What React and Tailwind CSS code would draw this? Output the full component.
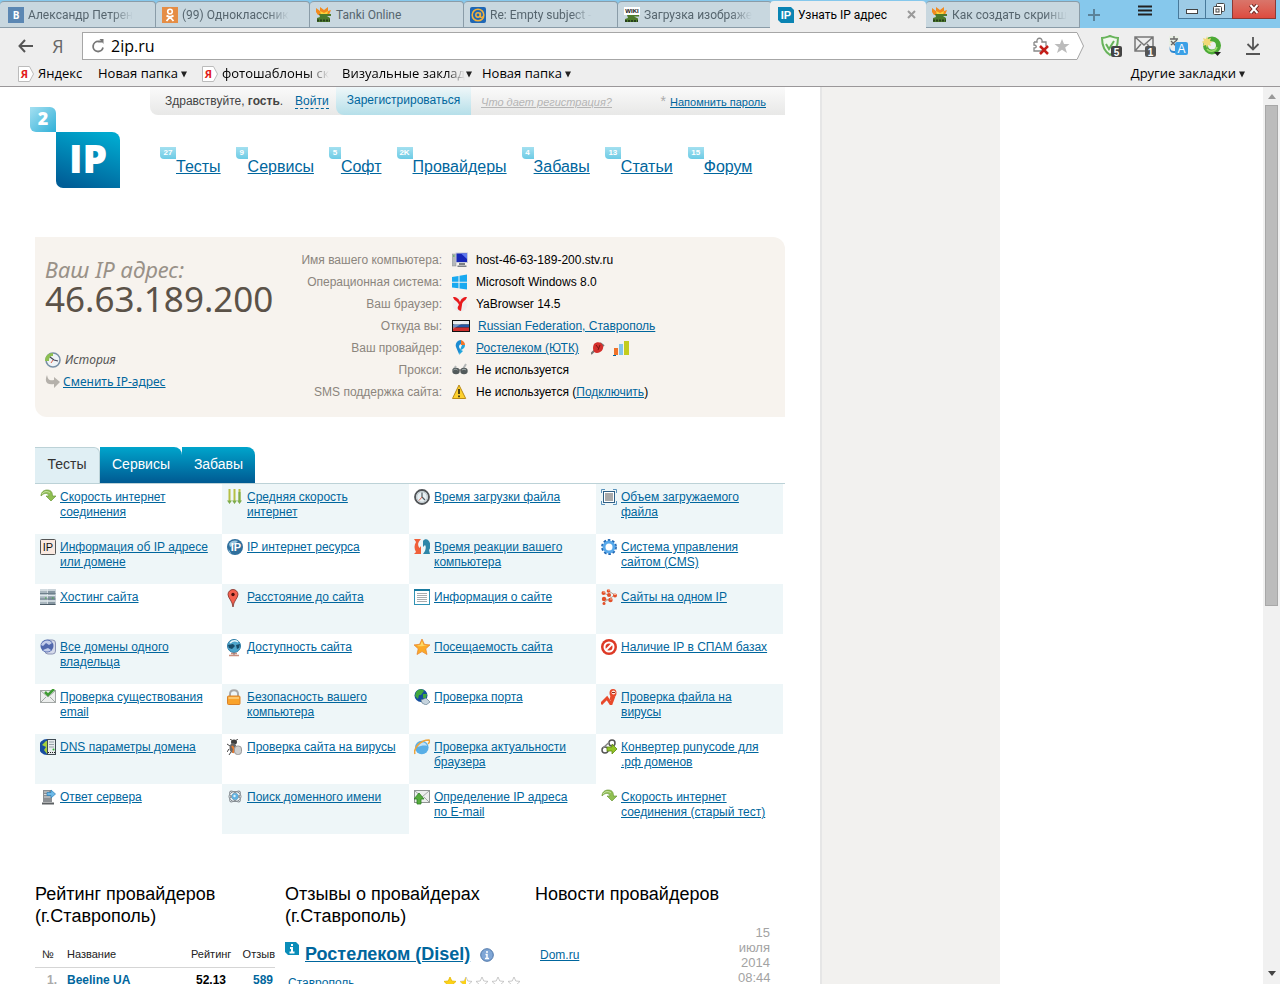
import React, { useState } from "react";

const Svg = ({ children, size = 16, box = 16, className = "" }) => (
  <svg
    width={size}
    height={size}
    viewBox={`0 0 ${box} ${box}`}
    fill="none"
    aria-hidden="true"
    className={`shrink-0 ${className}`}
  >
    {children}
  </svg>
);

// site icons, all drawn on a 16x16 grid
const icons = {
  speed: (
    <Svg>
      <path d="M1 7C1 3 4 1 7 1c4 0 5.500 2 5.500 6H16l-5 5-5-5h3C8 4 5 3 1 7z" fill="#8fbf52" stroke="#6f9a3c" strokeWidth=".7" />
      <path d="M2 5c2-3 6-3 8-1" stroke="#c9e2a4" />
    </Svg>
  ),
  arrows: (
    <Svg>
      <path d="M2.500 0v12M7.500 0v12M12.500 0v12" stroke="#b5bf45" strokeWidth="2" />
      <path d="M0 11.500h5L2.500 15zM5 11.500h5L7.500 15zM10 11.500h5L12.500 15z" fill="#7eac4d" />
      <path d="M12.500 3v9" stroke="#7eac4d" strokeWidth="2" />
    </Svg>
  ),
  clock: (
    <Svg>
      <circle cx="8" cy="8" r="7" fill="#e8eff2" stroke="#505356" strokeWidth="1.800" />
      <circle cx="8" cy="8" r="5.300" stroke="#b9c4c9" />
      <path d="M8 3.500V8l3 3" stroke="#4e5a61" strokeWidth="1.200" />
      <path d="M8 8l-3 3.500" stroke="#d8624d" />
    </Svg>
  ),
  size: (
    <Svg>
      <path d="M.5 4V.5H4M12 .5h3.500V4M15.500 12v3.500H12M4 15.500H.5V12" stroke="#5b93bd" />
      <rect x="2.500" y="2.500" width="11" height="11" fill="#fff" stroke="#2f5f85" />
      <rect x="4" y="4" width="8" height="8" fill="#a9a9a9" />
    </Svg>
  ),
  ip: (
    <Svg>
      <rect x=".5" y=".5" width="15" height="15" rx="1" fill="#f9e9e0" stroke="#555" />
      <text x="8" y="12" textAnchor="middle" fontSize="11" fontFamily="Liberation Sans, sans-serif" fill="#111">IP</text>
    </Svg>
  ),
  ipGlobe: (
    <Svg>
      <circle cx="8" cy="8" r="8" fill="#2f6f9d" />
      <path d="M2 5c2-4 7-4 9-3L8 5 3 8zM1.500 10l3 5c-2-1-3-3-3-5z" fill="#9cc6de" />
      <text x="9" y="12" textAnchor="middle" fontSize="11" fontWeight="bold" fontFamily="Liberation Sans, sans-serif" fill="#fff">IP</text>
    </Svg>
  ),
  reaction: (
    <Svg>
      <path d="M0 0h7L5 2.500C3.500 5 4 7 5.500 9L7 7v8H0l2-2C0 10 0 6 2 3z" fill="#f0603a" />
      <path d="M9 2c1-2 4-2 5-1 3 3 3 8 1 10l1 4H9l2-3c1-3 1-5 0-6L9 8z" fill="#2d86a8" />
    </Svg>
  ),
  gear: (
    <Svg>
      <circle cx="8" cy="8" r="6.500" stroke="#1f66b3" strokeWidth="2.800" strokeDasharray="2.400 1.700" />
      <circle cx="8" cy="8" r="5" fill="#fff" stroke="#58a8ea" strokeWidth="3" />
    </Svg>
  ),
  hosting: (
    <Svg>
      <rect width="7.500" height="16" fill="#aab7bf" />
      <rect x="8" width="7.500" height="16" fill="#8797a2" />
      <path d="M0 1h15.500M0 6.500h15.500M0 12h15.500" stroke="#dfe8ec" strokeWidth="1.500" />
      <path d="M0 4.500h15.500M0 10h15.500" stroke="#6f808c" />
      <path d="M5 9h1.500M12 9h1.500" stroke="#3faa3f" />
      <path d="M0 15.500h15.500" stroke="#4d5d68" />
    </Svg>
  ),
  pin: (
    <Svg className="overflow-visible">
      <path d="M6 18C5.500 12 1 9 1 5.500a5 5 0 0110 0C11 9 6.500 12 6 18z" fill="#f4604f" stroke="#7c2b23" strokeWidth=".8" />
      <circle cx="6" cy="5.500" r="1.700" fill="#4a0e0a" />
    </Svg>
  ),
  doc: (
    <Svg>
      <rect x=".5" y=".5" width="15" height="15" fill="#fff" stroke="#3093b5" />
      <path d="M0 1h16" stroke="#1a7ba0" strokeWidth="2" />
      <path d="M3 4.500h10M3 6.500h10M3 8.500h10M3 10.500h10M3 12.500h10" stroke="#a8acae" />
    </Svg>
  ),
  sites: (
    <Svg>
      <path d="M6 1l8 5-12 8M2 4l8 3M2 9l8 3" stroke="#b9a292" />
      <g fill="#e2502a">
        <circle cx="2.500" cy="4" r="2" />
        <circle cx="7.500" cy="2" r="1.800" />
        <circle cx="8" cy="6" r="2" />
        <circle cx="14" cy="6.500" r="2" />
        <circle cx="3" cy="10" r="2.200" />
        <circle cx="9.500" cy="11" r="2.200" />
        <circle cx="3" cy="14.500" r="1.500" />
      </g>
      <path d="M7 1h2M2 3h2M13 5.500h2M9 10h2" stroke="#f9b394" />
    </Svg>
  ),
  domains: (
    <Svg>
      <rect x="5" y="1" width="10.500" height="14" rx="3" fill="#d5daea" stroke="#8b93b4" />
      <circle cx="7" cy="7" r="6.500" fill="#5168ad" />
      <path d="M1 6c2-5 8-6 11-2L9 6 6 4 3 7zM3 11c2 2 6 2 8 0L8 9z" fill="#c3cdea" />
    </Svg>
  ),
  globe: (
    <Svg className="overflow-visible">
      <circle cx="7" cy="7" r="6.500" fill="#4da5cc" stroke="#2d7ca5" />
      <path d="M1 6l5-1 2 2-3 3-3-1zM9 6l4-1-1 4-2 1z" fill="#164a68" />
      <path d="M3 4c2-2 5-3 8-1" stroke="#e6f6fc" strokeWidth="1.500" />
      <path d="M4 14.500h6M2 16.500h10" stroke="#c98f7f" strokeWidth="1.500" />
      <path d="M7 14v2" stroke="#88767a" />
    </Svg>
  ),
  star: (
    <Svg>
      <path d="M8 0l2.400 5.300 5.600.6-4.200 3.900L13 15.500 8 12.600l-5 2.900 1.200-5.700L0 5.900l5.600-.6z" fill="#fba928" stroke="#e5812a" strokeWidth=".7" />
      <path d="M8 2l1.700 4.200 3.500.5C9 7 5 8 3 6.500L6.300 6z" fill="#fdd866" />
    </Svg>
  ),
  spam: (
    <Svg>
      <circle cx="8" cy="8" r="8" fill="#dd3a26" />
      <circle cx="8" cy="8" r="4.500" stroke="#fff" strokeWidth="2" />
      <path d="M5 11l6-6" stroke="#fff" strokeWidth="2" />
    </Svg>
  ),
  mailCheck: (
    <Svg>
      <rect x=".5" y="1.500" width="15" height="12" fill="#eceeed" stroke="#a3a8a6" />
      <path d="M1 2l7 6 7-6M1 13l5-5M15 13l-5-5" stroke="#a3a8a6" />
      <path d="M5 3l3 3 6-6" stroke="#3f9c34" strokeWidth="2.500" />
    </Svg>
  ),
  lock: (
    <Svg>
      <path d="M3 8V5c0-5 8-5 8 0v3" stroke="#a9a9a9" strokeWidth="2" />
      <rect x=".5" y="7" width="12.500" height="8.500" rx="1" fill="#f9a32c" stroke="#d9822a" />
      <path d="M1.500 9h10.500" stroke="#fdd384" strokeWidth="1.500" />
    </Svg>
  ),
  port: (
    <Svg>
      <circle cx="7" cy="6.500" r="6.500" fill="#144d9d" />
      <path d="M2 3c3-4 7-3 8-1L7 6l-2 0-1 4-3-3zM9 5l4 0-1 4-3 0z" fill="#42a83e" />
      <path d="M7 11l5-2 4 4-4 3-4-2z" fill="#c6d4de" stroke="#627d91" strokeWidth=".7" />
    </Svg>
  ),
  virus: (
    <Svg>
      <path d="M0 15l6-6 4 6 3-8" stroke="#e8492b" strokeWidth="3" />
      <ellipse cx="12" cy="4" rx="3.500" ry="4" fill="#e8492b" />
      <ellipse cx="12.500" cy="3.500" rx="2" ry="2" fill="#fbe3dc" />
      <path d="M11 3.500h3" stroke="#8a2413" />
      <path d="M10.500 7l-1 4" stroke="#e8492b" strokeWidth="2" />
    </Svg>
  ),
  dns: (
    <Svg>
      <path d="M7 0A8 8 0 007 16z" fill="#174da0" />
      <path d="M6 2L2 6l4 2-2 3 3 4V2z" fill="#a6cf3c" />
      <rect x="7.500" y=".5" width="8" height="15" fill="#e6eaec" stroke="#3f4a52" />
      <path d="M9 3h5M9 5.500h5M9 8h5" stroke="#98a2a8" />
      <circle cx="13.500" cy="10.500" r="1" fill="#2bb52b" />
      <path d="M8 13.500h7" stroke="#222" strokeDasharray="1 1" />
    </Svg>
  ),
  bug: (
    <Svg>
      <ellipse cx="7" cy="3" rx="3" ry="2.500" fill="#3d3d3d" />
      <ellipse cx="6" cy="9" rx="3.500" ry="5" fill="#666" />
      <path d="M3 0l3 2M11 0L8 2M3 7L0 5M2 10l-2 3M4 13l-2 3" stroke="#444" />
      <path d="M5 7l2 3-1 4" stroke="#ea7a2e" strokeWidth="2" />
      <rect x="7.500" y="7" width="7" height="8.500" rx="3" fill="#cfcfcf" stroke="#9a9a9a" />
    </Svg>
  ),
  ie: (
    <Svg>
      <circle cx="7.800" cy="8.500" r="6.800" fill="#58aee6" />
      <path d="M3 8c1-6 9-6 10-1C10 6 7 7 3 8z" fill="#bfe2f8" />
      <path d="M1 15C-1 10 6 1 15 1c1 1 0 3-1 4" stroke="#eda43b" strokeWidth="1.500" />
    </Svg>
  ),
  puny: (
    <Svg>
      <circle cx="11" cy="4" r="3" stroke="#555" strokeWidth="1.500" />
      <circle cx="4" cy="11" r="3" stroke="#555" strokeWidth="1.500" />
      <path d="M8.500 3L2 9M12 7l-5 5" stroke="#888" strokeWidth="1.500" />
      <path d="M6 8h5V5l5 5-5 5v-3H6z" fill="#93c426" stroke="#5f8b13" strokeWidth=".8" />
    </Svg>
  ),
  server: (
    <Svg>
      <path d="M3 1h8l1 1v11H3z" fill="#8b8f93" />
      <path d="M4 3h5M4 5.500h5M4 8h7" stroke="#d8dadb" />
      <path d="M2 14.500h12" stroke="#5c6063" strokeWidth="2" />
      <path d="M7 3.500h4V1l4.500 4L11 9V6.500H7z" fill="#6cb9e8" stroke="#2c80b8" strokeWidth=".7" />
    </Svg>
  ),
  atom: (
    <Svg>
      <g stroke="#82898f">
        <ellipse cx="8" cy="7.500" rx="7" ry="3" transform="rotate(45 8 7.500)" />
        <ellipse cx="8" cy="7.500" rx="7" ry="3" transform="rotate(-45 8 7.500)" />
        <ellipse cx="8" cy="7.500" rx="6" ry="5" />
      </g>
      <circle cx="8" cy="7.500" r="3.200" fill="#5fb2e2" />
      <circle cx="7.500" cy="7" r="1.200" fill="#dff2fc" />
    </Svg>
  ),
  mailUp: (
    <Svg>
      <rect x=".5" y="1.500" width="15" height="12" fill="#eceeed" stroke="#8f9593" />
      <path d="M1 2l7 6 7-6M15 13l-5-5" stroke="#a3a8a6" />
      <path d="M3 15V10H0l5-6 5 6H7v5z" fill="#57ad3e" stroke="#2f7d24" strokeWidth=".8" />
    </Svg>
  ),
  computer: (
    <Svg>
      <rect y="2" width="4" height="12" fill="#b5b8bb" stroke="#8b8f93" strokeWidth=".5" />
      <path d="M1 4h1.500" stroke="#35b535" />
      <rect x="4" y="1" width="11.500" height="9.500" fill="#1626b8" stroke="#c6cad8" />
      <path d="M9 1.500h6V7z" fill="#5d78ef" />
      <path d="M7 11h6v2H7zM5.500 13.500h9V15h-9z" fill="#7b8085" />
    </Svg>
  ),
  windows: (
    <Svg>
      <path d="M0 3l6.500-1v5.700H0zM7.500 1.800L15 .5v7.200H7.500zM0 8.700h6.500v5.600L0 13.400zM7.500 8.700H15v6.800l-7.500-1z" fill="#19a9f0" />
    </Svg>
  ),
  yabrowser: (
    <Svg>
      <circle cx="8" cy="8" r="7.500" fill="#eeeeee" />
      <path d="M1 1c4 0 6 2 7 5 1-3 3-5 7-5-1 4-5 4-5 8l-1 6c-4-1-4-4-2-6-1-4-5-4-6-8z" fill="#e8191c" />
    </Svg>
  ),
  flag: (
    <svg width="18" height="12" viewBox="0 0 18 12" aria-hidden="true" className="shrink-0">
      <rect width="18" height="12" fill="#111" />
      <path d="M1 1h16v3.500H1z" fill="#e7eaee" />
      <path d="M1 4.500h16v3H1z" fill="#2458a6" />
      <path d="M1 7.500h16V11H1z" fill="#cf2f2d" />
      <path d="M1 5l6-4h7L1 9z" fill="#fff" opacity=".35" />
    </svg>
  ),
  rostelecom: (
    <Svg>
      <path d="M9 0C5 0 3 4 4 7l3 7 2-3-2-4c0-2 1-3 3-3z" fill="#1c8bd1" />
      <path d="M9 0c3 1 4 3 4 5L9 5z" fill="#f1762b" />
      <path d="M13 5c0 3-2 4-4 5l2 1-4 4 1-5 2-5z" fill="#21a5dc" />
    </Svg>
  ),
  glasses: (
    <Svg>
      <path d="M1 8l3-4M11 7l3-5" stroke="#b5b8b8" strokeWidth="2" />
      <ellipse cx="4" cy="9" rx="3.700" ry="3.200" fill="#525a5b" />
      <ellipse cx="12" cy="9" rx="3.700" ry="3.200" fill="#525a5b" />
      <path d="M1.500 8c1-1 3-1 4 0M10 8c1-1 3-1 4 0" stroke="#a9b3b3" />
      <path d="M6 8h4" stroke="#666" />
    </Svg>
  ),
  warning: (
    <Svg>
      <path d="M7 1L13.700 14.500H.5z" fill="#fdd02c" stroke="#b98a17" strokeLinejoin="round" />
      <path d="M7 5v5M7 11.500v1.800" stroke="#3f3410" strokeWidth="1.800" />
    </Svg>
  ),
};

const tankIcon = (
  <Svg>
    <path d="M0 1l4 3 0-4 4 3 4-3 0 4 3-1-2 5H2L0 5z" fill="#f28a1e" />
    <path d="M4 4l4 2 4-2-1 4H5z" fill="#fcd23a" />
    <path d="M3 7h12v2H11l3 2v4H1v-4l3-1z" fill="#4d7a2c" />
    <path d="M1 13.500h13" stroke="#26401a" strokeWidth="2" strokeDasharray="2 1" />
  </Svg>
);

const browserTabs = [
  {
    title: "Александр Петрен",
    icon: (
      <Svg>
        <rect width="16" height="16" fill="#5b87b3" />
        <text x="8" y="12" textAnchor="middle" fontSize="10" fontWeight="bold" fontFamily="Open Sans, sans-serif" fill="#fff">B</text>
      </Svg>
    ),
  },
  {
    title: "(99) Одноклассник",
    icon: (
      <Svg>
        <rect width="16" height="16" fill="#e58d45" />
        <circle cx="8" cy="4.500" r="2.300" stroke="#fff" strokeWidth="1.600" />
        <path d="M4.500 8.500c2 1.500 5 1.500 7 0M8 10l-3.500 4M8 10l3.500 4" stroke="#fff" strokeWidth="1.800" />
      </Svg>
    ),
  },
  { title: "Tanki Online", icon: tankIcon },
  {
    title: "Re: Empty subject -",
    icon: (
      <Svg>
        <rect width="16" height="16" rx="2" fill="#1f67b5" />
        <circle cx="8" cy="8" r="5.800" stroke="#f3b23c" strokeWidth="1.600" />
        <circle cx="8" cy="8" r="2.200" stroke="#f3b23c" strokeWidth="1.500" />
        <path d="M10.500 5.500v4.500c1 1 2.500 0 3-1" stroke="#f3b23c" strokeWidth="1.300" />
      </Svg>
    ),
  },
  {
    title: "Загрузка изображе",
    icon: (
      <Svg>
        <rect width="16" height="8" fill="#fff" />
        <text x="8" y="6" textAnchor="middle" fontSize="6" fontWeight="bold" fontFamily="Liberation Sans, sans-serif" fill="#111">WIKI</text>
        <path d="M3 8h12v1.500H10l4 2V15H1v-3l3-1z" fill="#4d7a2c" />
        <path d="M1 14h13" stroke="#26401a" strokeWidth="2" strokeDasharray="2 1" />
      </Svg>
    ),
  },
  {
    title: "Узнать IP адрес",
    active: true,
    icon: (
      <Svg>
        <path d="M0 0h13l3 3v13H3l-3-3z" fill="#0b84b3" />
        <text x="8" y="12" textAnchor="middle" fontSize="11" fontWeight="bold" fontFamily="Liberation Sans, sans-serif" fill="#fff">IP</text>
      </Svg>
    ),
  },
  { title: "Как создать скринш", icon: tankIcon },
];

const navLinks = [
  ["27", "Тесты"],
  ["9", "Сервисы"],
  ["5", "Софт"],
  ["2K", "Провайдеры"],
  ["4", "Забавы"],
  ["13", "Статьи"],
  ["15", "Форум"],
];

const tests = [
  ["speed", "Скорость интернет соединения"],
  ["arrows", "Средняя скорость интернет"],
  ["clock", "Время загрузки файла"],
  ["size", "Объем загружаемого файла"],
  ["ip", "Информация об IP адресе или домене"],
  ["ipGlobe", "IP интернет ресурса"],
  ["reaction", "Время реакции вашего компьютера"],
  ["gear", "Система управления сайтом (CMS)"],
  ["hosting", "Хостинг сайта"],
  ["pin", "Расстояние до сайта"],
  ["doc", "Информация о сайте"],
  ["sites", "Сайты на одном IP"],
  ["domains", "Все домены одного владельца"],
  ["globe", "Доступность сайта"],
  ["star", "Посещаемость сайта"],
  ["spam", "Наличие IP в СПАМ базах"],
  ["mailCheck", "Проверка существования email"],
  ["lock", "Безопасность вашего компьютера"],
  ["port", "Проверка порта"],
  ["virus", "Проверка файла на вирусы"],
  ["dns", "DNS параметры домена"],
  ["bug", "Проверка сайта на вирусы"],
  ["ie", "Проверка актуальности браузера"],
  ["puny", "Конвертер punycode для .рф доменов"],
  ["server", "Ответ сервера"],
  ["atom", "Поиск доменного имени"],
  ["mailUp", "Определение IP адреса по\u00a0E-mail"],
  ["speed", "Скорость интернет соединения (старый тест)"],
];

const Link = ({ children, className = "" }) => (
  <a href="#" className={`text-[#00669d] underline ${className}`}>
    {children}
  </a>
);

const BrowserTabs = () => (
  <div className="flex h-7 bg-[#86c8ec] pt-px text-xs">
    <div role="tablist" className="flex min-w-0 [font-family:Roboto,'Open_Sans',sans-serif]">
      {browserTabs.map((tab) => (
        <button
          key={tab.title}
          role="tab"
          aria-selected={!!tab.active}
          className={
            tab.active
              ? "-ml-0.5 flex w-[156px] min-w-0 items-center gap-1 rounded-t-sm bg-[#eeeeee] px-2 text-black"
              : "flex w-[154px] min-w-0 items-center gap-1 rounded-t-sm border-t border-r border-b border-[#8a9ca8] bg-[#c8d7df] pl-1.5 text-[#56656e] first:w-[156px] first:pl-2"
          }
        >
          {tab.icon}
          <span
            className={
              tab.active || tab.title === "Tanki Online"
                ? "flex-1 text-left whitespace-nowrap"
                : "text-left whitespace-nowrap mask-r-from-80%"
            }
          >
            {tab.title}
          </span>
          {tab.active && (
            <Svg size={9} box={9} className="mr-0.5">
              <path d="M1 1l7 7M8 1L1 8" stroke="#999" strokeWidth="2" />
            </Svg>
          )}
        </button>
      ))}
    </div>
    <button aria-label="Новая вкладка" className="ml-2 flex items-center">
      <Svg size={12} box={12}>
        <path d="M6 0v12M0 6h12" stroke="#5b8299" strokeWidth="2" />
      </Svg>
    </button>
    <button aria-label="Меню" className="mr-[26px] ml-auto flex pt-1">
      <Svg size={14} box={14}>
        <path d="M0 1.500h14M0 5.500h14M0 9.500h14" stroke="#222" strokeWidth="2" />
      </Svg>
    </button>
    <div className="-mt-px mr-1 flex h-[19px]">
      <button aria-label="Свернуть" className="flex w-7 items-center justify-center border border-t-0 border-[#48799a] bg-[#9dcbe6]">
        <Svg size={12} box={12}>
          <rect x=".5" y="6.500" width="11" height="4" fill="#fff" stroke="#444" />
        </Svg>
      </button>
      <button aria-label="Развернуть" className="flex w-[26px] items-center justify-center border-b border-[#48799a] bg-[#9dcbe6]">
        <Svg size={12} box={12}>
          <rect x="3.500" y=".5" width="8" height="8" rx="1" fill="#fff" stroke="#444" />
          <rect x=".5" y="3.500" width="8" height="8" rx="1" fill="#fff" stroke="#444" />
          <rect x="3" y="6" width="3" height="3" stroke="#444" />
        </Svg>
      </button>
      <button aria-label="Закрыть" className="flex w-11 items-center justify-center border border-t-0 border-[#8c3a35] bg-linear-to-b from-[#d9756a] to-[#dd4a3f]">
        <Svg size={10} box={10}>
          <path d="M1.500 1l7 8M8.500 1l-7 8" stroke="#6b2420" strokeWidth="4" />
          <path d="M1.500 1l7 8M8.500 1l-7 8" stroke="#fff" strokeWidth="2" />
        </Svg>
      </button>
    </div>
  </div>
);

const Toolbar = () => {
  const [address, setAddress] = useState("2ip.ru");

  return (
    <div className="flex items-center pt-1">
      <button aria-label="Назад" className="ml-[18px]">
        <Svg>
          <path d="M15 8H2M7 2L1.500 8 7 14" stroke="#555" strokeWidth="2" />
        </Svg>
      </button>
      <button aria-label="Яндекс" className="ml-4 w-4 text-lg leading-7 text-[#666] [font-family:'Liberation_Sans_Narrow','Open_Sans',sans-serif]">
        Я
      </button>
      <div className="ml-4 flex h-7 flex-1 items-center border border-r-0 border-[#a6a6a6] bg-white">
        <button aria-label="Обновить" className="ml-2">
          <Svg size={14} box={14}>
            <path d="M12 8.500A5 5 0 117.500 2.500H11" stroke="#777" strokeWidth="1.800" />
            <path d="M8.500 0l4 0v5z" fill="#777" />
          </Svg>
        </button>
        <input
          aria-label="Адрес"
          value={address}
          onChange={(e) => setAddress(e.target.value)}
          className="ml-1.5 min-w-0 flex-1 bg-transparent text-base text-black outline-none"
        />
        <Svg size={18} box={18}>
          <path d="M2 5h3c-1-5 6-5 5 0h4v4M14 14H2v-3c3 0 3-3 0-3V5" stroke="#888" strokeWidth="1.300" />
          <path d="M8 9l8 8M16 9l-8 8" stroke="#c41f1a" strokeWidth="2.500" />
        </Svg>
        <Svg className="mr-1 ml-1">
          <path d="M8 1l2 5h5.500l-4.300 3.400L13 15l-5-3.300L3 15l1.800-5.600L.5 6H6z" fill="#bbb" />
        </Svg>
      </div>
      <svg width="10" height="28" viewBox="0 0 10 28" aria-hidden="true">
        <path d="M0 0h3l6 14-6 14H0z" fill="#fff" />
        <path d="M0 .5h3L9.500 14 3 27.500H0" fill="none" stroke="#a6a6a6" />
      </svg>
      <div className="mr-[18px] ml-4 flex items-center gap-3">
        <Svg size={22} box={22}>
          <path d="M2 3c3 0 5-1 8-2 3 1 5 2 8 2 0 8-2 13-8 17C4 16 2 11 2 3z" fill="#f0f7ed" stroke="#67b35a" strokeWidth="2" />
          <path d="M6 9l3 5 5-8" stroke="#67b35a" strokeWidth="2" />
          <rect x="11" y="11" width="11" height="11" rx="2" fill="#444" />
          <text x="16.500" y="20.500" textAnchor="middle" fontSize="10" fontWeight="bold" fontFamily="Liberation Sans, sans-serif" fill="#fff">5</text>
        </Svg>
        <Svg size={22} box={22}>
          <path d="M1 2h18v14H1zM1 2l9 8 9-8M1 16l6-7M19 16l-6-7" stroke="#777" strokeWidth="1.500" />
          <rect x="11" y="11" width="11" height="11" rx="2" fill="#555" />
          <text x="16.500" y="20.500" textAnchor="middle" fontSize="10" fontWeight="bold" fontFamily="Liberation Sans, sans-serif" fill="#fff">1</text>
        </Svg>
        <Svg size={20} box={20}>
          <rect x="1" y="0" width="10" height="10" rx="1" fill="#e9efe4" />
          <path d="M2 3h8M6 0v3M3 9l6-5M3 5l5 5" stroke="#666" strokeWidth="1.300" />
          <path d="M2 10c0 4 1 5 5 5v-2l3 4H6C2 17 1 14 2 10z" fill="#2c86cf" />
          <rect x="7" y="6" width="13" height="13" rx="2" fill="#3ba0e6" />
          <text x="13.500" y="16.500" textAnchor="middle" fontSize="12" fontFamily="Liberation Sans, sans-serif" fill="#fff">A</text>
        </Svg>
        <Svg size={20} box={20} className="ml-0.5">
          <circle cx="10" cy="9.500" r="6.500" stroke="#4caa36" strokeWidth="5" />
          <path d="M5 13c3 4 9 2 10-2" stroke="#9ddc6a" strokeWidth="1.500" />
          <path d="M5 0l1 3 3-1-1 3 3 1-3 1 1 3-3-1-1 3-1-3-3 1 1-3-3-1 3-1-1-3 3 1z" fill="#f2d978" />
          <path d="M12 16h7l-3.500 4z" fill="#222" />
        </Svg>
        <Svg size={18} box={18} className="ml-2.5">
          <path d="M9 0v12M3.500 7L9 12.500 14.500 7M2 17h14" stroke="#555" strokeWidth="1.800" />
        </Svg>
      </div>
    </div>
  );
};

const YandexIcon = () => (
  <Svg>
    <path d="M.5 .5h11l4 7.500-4 7.500H.5z" fill="#fff" stroke="#bbb" />
    <text x="6.500" y="12" textAnchor="middle" fontSize="11" fontWeight="bold" fontFamily="Open Sans, sans-serif" fill="#e21b1b">Я</text>
  </Svg>
);

const Folder = ({ children, className = "" }) => (
  <button className={`flex items-center gap-0.5 ${className}`}>
    <span className="whitespace-nowrap">{children}</span>
    <Svg size={8} box={8}>
      <path d="M1 1.500h6L4 7.500z" fill="#222" />
    </Svg>
  </button>
);

const Bookmarks = () => (
  <div className="flex h-[27px] items-center border-b border-[#9a9799] px-[18px] pt-0.5 text-[13px] text-black">
    <a href="#" className="flex w-20 items-center gap-1">
      <YandexIcon />
      Яндекс
    </a>
    <Folder className="w-[104px]">Новая папка</Folder>
    <a href="#" className="flex w-[140px] items-center gap-1">
      <YandexIcon />
      <span className="whitespace-nowrap mask-r-from-80%">фотошаблоны ск</span>
    </a>
    <button className="flex w-[140px] items-center">
      <span className="text-left whitespace-nowrap mask-r-from-85%">Визуальные заклад</span>
      <Svg size={8} box={8}>
        <path d="M1 1.500h6L4 7.500z" fill="#222" />
      </Svg>
    </button>
    <Folder>Новая папка</Folder>
    <Folder className="mr-4 ml-auto">Другие закладки</Folder>
  </div>
);

const SiteHeader = () => (
  <header className="flex h-[150px] pr-[35px]">
    <a href="#" aria-label="2IP" className="w-[150px] shrink-0 pt-5 pl-[30px]">
      <svg width="90" height="82" viewBox="0 0 90 82">
        <defs>
          <linearGradient id="small" x1="0" y1="0" x2="1" y2="1">
            <stop stopColor="#a5e0f1" />
            <stop offset="1" stopColor="#2fb0d8" />
          </linearGradient>
          <linearGradient id="big" x1=".7" y1="0" x2=".3" y2="1">
            <stop stopColor="#00a9cf" />
            <stop offset="1" stopColor="#005e97" />
          </linearGradient>
        </defs>
        <path d="M0 0h20a6 6 0 016 6v19H6a6 6 0 01-6-6z" fill="url(#small)" />
        <path d="M26 25h56a8 8 0 018 8v48H33a7 7 0 01-7-7z" fill="url(#big)" />
        <g fontFamily="Open Sans, Liberation Sans, sans-serif" fontWeight="800" fill="#fff" textAnchor="middle">
          <text x="13" y="18" fontSize="18">2</text>
          <text x="58" y="66" fontSize="39">IP</text>
        </g>
      </svg>
    </a>
    <div className="min-w-0 flex-1">
      <div className="flex h-7 rounded-bl-lg bg-linear-to-b from-[#fafafa] to-[#e8e8e7] text-xs text-[#444]">
        <p className="w-[145px] pt-1.5 pl-[15px]">
          Здравствуйте, <b>гость</b>.
        </p>
        <div className="w-[41px] pt-1.5">
          <a href="#" className="border-b border-dashed border-[#00669d] text-[#00669d]">Войти</a>
        </div>
        <a href="#" className="w-[135px] rounded-bl-lg bg-linear-to-b from-[#eff7f9] to-[#b5dfe9] pt-[5px] text-center text-[#00669d]">
          Зарегистрироваться
        </a>
        <a href="#" className="pt-2 pl-2.5 text-[11px] text-[#b5b5b5] italic underline">
          Что дает регистрация?
        </a>
        <p className="mr-[19px] ml-auto flex gap-1 pt-2 text-[11px]">
          <span className="-mt-1 text-sm text-[#aaa]">*</span>
          <Link>Напомнить пароль</Link>
        </p>
      </div>
      <nav className="flex gap-[15px] pt-8 pl-2.5">
        {navLinks.map(([count, label]) => (
          <div key={label} className="flex items-start">
            <span
              className={`h-3 rounded-bl bg-linear-to-b from-[#a3e0f0] to-[#6ccbe5] text-center text-[8px] leading-3 font-bold text-white ${
                count.length > 1 ? "w-4" : "w-3"
              }`}
            >
              {count}
            </span>
            <Link className="pt-2 text-base">{label}</Link>
          </div>
        ))}
      </nav>
    </div>
  </header>
);

const InfoRow = ({ label, icon, children }) => (
  <div className="flex h-[22px] items-center">
    <dt className="w-[157px] shrink-0 text-right text-[#8b857d]">{label}:</dt>
    <dd className="flex items-center pl-2.5 whitespace-nowrap text-black">
      <span className="flex w-6">{icons[icon]}</span>
      {children}
    </dd>
  </div>
);

const IpInfo = () => (
  <section className="flex h-[180px] rounded-tr-xl rounded-bl-xl bg-[#f7f3ee] text-xs">
    <div className="w-[250px] shrink-0 pt-5 pl-2.5 [font-family:'Noto_Sans','Open_Sans',sans-serif]">
      <h1>
        <span className="block text-[22px] leading-6 text-[#999188] italic">Ваш IP адрес:</span>
        <span className="block text-[35px] leading-9 text-[#5b5248]">46.63.189.200</span>
      </h1>
      <p className="mt-8 flex h-[22px] items-center gap-1 text-[#555] italic">
        <Svg>
          <circle cx="8" cy="8" r="7" fill="#eef3f6" stroke="#7890a6" strokeWidth="1.500" />
          <path d="M0 9C0 4 3 1 8 1v3C5 4 4 6 4 9z" fill="#8dbf52" />
          <path d="M5 5l4 3 4 1" stroke="#445" strokeWidth="1.200" />
          <path d="M8 8l-2 3" stroke="#d8624d" />
        </Svg>
        История
      </p>
      <p className="flex h-[22px] items-center gap-0.5">
        <Svg>
          <path d="M2 1c-3 7 0 10 7 9v4l6-6-6-5v3C5 7 3 6 2 1z" fill="#b5b1ab" />
        </Svg>
        <Link>Сменить IP-адрес</Link>
      </p>
    </div>
    <dl className="pt-3">
      <InfoRow label="Имя вашего компьютера" icon="computer">host-46-63-189-200.stv.ru</InfoRow>
      <InfoRow label="Операционная система" icon="windows">Microsoft Windows 8.0</InfoRow>
      <InfoRow label="Ваш браузер" icon="yabrowser">YaBrowser 14.5</InfoRow>
      <InfoRow label="Откуда вы" icon="flag">
        <Link className="ml-0.5">Russian Federation, Ставрополь</Link>
      </InfoRow>
      <InfoRow label="Ваш провайдер" icon="rostelecom">
        <Link>Ростелеком (ЮТК)</Link>
        <Svg size={14} box={14} className="ml-3">
          <path d="M0 13l4-4M9 2l4 3" stroke="#777" strokeWidth="2" />
          <path d="M3 3c3-3 8-2 9 2 1 3-2 7-6 7-4 0-5-5-3-9z" fill="#d42f2c" />
          <path d="M5 4l3 4M9 4l-2 5" stroke="#7b1512" />
        </Svg>
        <Svg className="ml-2">
          <path d="M0 15.500h3" stroke="#00669d" />
          <path d="M1 8h4v7H1z" fill="#f0722a" />
          <path d="M6 4h4v11H6z" fill="#82c4ea" />
          <path d="M11 1h5v14h-5z" fill="#c4cc1d" />
        </Svg>
      </InfoRow>
      <InfoRow label="Прокси" icon="glasses">Не используется</InfoRow>
      <InfoRow label="SMS поддержка сайта" icon="warning">
        <span>
          Не используется (<Link>Подключить</Link>)
        </span>
      </InfoRow>
    </dl>
  </section>
);

const Tests = () => (
  <section className="pt-[30px]">
    <div role="tablist" className="flex h-[37px] border-b border-[#bcd2d7] text-sm">
      <button role="tab" aria-selected="true" className="w-[65px] rounded-tr-md border-t border-r border-[#bcd2d7] bg-[#e0eff4] pb-1 text-[#333]">
        Тесты
      </button>
      <button role="tab" aria-selected="false" className="w-[82px] rounded-tr-lg bg-linear-to-b from-[#00a5cc] to-[#005a92] pb-0.5 text-white">
        Сервисы
      </button>
      <button role="tab" aria-selected="false" className="w-[73px] rounded-tr-lg bg-linear-to-b from-[#00a5cc] to-[#005a92] pb-0.5 text-white">
        Забавы
      </button>
    </div>
    <ul className="mr-0.5 grid grid-cols-4 text-xs leading-[15px]">
      {tests.map(([icon, label], i) => {
        // checkerboard, the very last cell stays white
        const shaded = (i + Math.floor(i / 4)) % 2 === 1 && i !== tests.length - 1;
        return (
          <li key={i} className={`flex h-[50px] gap-1 pt-[5px] pr-3 pl-[5px] ${shaded ? "bg-[#eef6f8]" : ""}`}>
            {icons[icon]}
            <span className="pt-px">
              <Link>{label}</Link>
            </span>
          </li>
        );
      })}
    </ul>
  </section>
);

const RatingStars = ({ value }) => (
  <span className="flex gap-0.5">
    {[0, 1, 2, 3, 4].map((n) => (
      <Svg key={n} size={14} box={14}>
        <path d="M7 1l1.800 4 4.200.400-3.200 3 1 4.100L7 10.300l-3.800 2.200 1-4.100L1 5.400 5.200 5z" fill={value > n + 0.5 ? "#fcd116" : "#fff"} stroke={value > n + 0.5 ? "#e5b800" : "#bbb"} strokeWidth=".8" />
        {value === n + 0.5 && <path d="M7 1v9.300l-3.800 2.200 1-4.100L1 5.400 5.200 5z" fill="#fcd116" />}
      </Svg>
    ))}
  </span>
);

const Providers = () => (
  <div className="grid grid-cols-3 pt-[49px] text-xs">
    <section className="pr-2.5">
      <h2 className="text-lg leading-[22px] text-black">
        Рейтинг провайдеров
        <br />
        (г.Ставрополь)
      </h2>
      <table className="mt-4 w-full table-fixed">
        <thead>
          <tr className="h-6 border-b border-[#d5d5d5] text-left text-[11px] text-[#222]">
            <th className="w-8 pl-[7px] font-normal">№</th>
            <th className="font-normal">Название</th>
            <th className="w-[50px] font-normal">Рейтинг</th>
            <th className="w-[34px] text-right font-normal">Отзыв</th>
          </tr>
        </thead>
        <tbody>
          <tr className="h-[26px] font-bold">
            <td className="pl-3 text-[#aaa]">1.</td>
            <td>
              <a href="#" className="text-[#00669d]">Beeline UA</a>
            </td>
            <td className="pl-[5px] text-black">52.13</td>
            <td className="pr-0.5 text-right">
              <a href="#" className="text-[#00669d]">589</a>
            </td>
          </tr>
        </tbody>
      </table>
    </section>
    <section>
      <h2 className="text-lg leading-[22px] text-black">
        Отзывы о провайдерах
        <br />
        (г.Ставрополь)
      </h2>
      <div className="mt-[15px] flex gap-1.5">
        <Svg size={14} box={14}>
          <path d="M0 0h11l3 3v10H3l-3-3z" fill="#0a8db9" />
          <path d="M7 2v2M5 6h2v4M4.500 10.500h5" stroke="#fff" strokeWidth="2" />
        </Svg>
        <Link className="text-lg leading-6 font-bold whitespace-nowrap">Ростелеком (Disel)</Link>
        <Svg size={14} box={14} className="mt-1.5 ml-1">
          <circle cx="7" cy="7" r="6.300" fill="#7fa6d6" stroke="#4d76a8" />
          <path d="M7 3v2M5.500 6.500H7V11M5 10.500h4" stroke="#fff" strokeWidth="1.500" />
        </Svg>
      </div>
      <div className="mr-3.5 ml-[3px] flex items-center justify-between pt-2 leading-[18px]">
        <a href="#" className="text-[#00669d]">Ставрополь</a>
        <RatingStars value={1.5} />
      </div>
    </section>
    <section>
      <h2 className="text-lg leading-[22px] text-black">Новости провайдеров</h2>
      <div className="mt-5 mr-[15px] flex items-center justify-between pl-[5px]">
        <Link>Dom.ru</Link>
        <p className="w-8 text-right text-[13px] leading-[15px] text-[#a3a3a3]">15 июля 2014 08:44</p>
      </div>
    </section>
  </div>
);

const Scrollbar = () => (
  <div aria-hidden="true" className="flex w-[17px] shrink-0 flex-col items-center justify-between bg-[#f1f1f1] py-1.5">
    <div className="flex h-[58%] flex-col items-center gap-1">
      <Svg size={8} box={8}>
        <path d="M0 6l4-5 4 5z" fill="#999" />
      </Svg>
      <div className="w-[13px] flex-1 border border-[#a8a8a8] bg-[#bcbcbc]"></div>
    </div>
    <Svg size={8} box={8}>
      <path d="M0 1h8L4 6z" fill="#444" />
    </Svg>
  </div>
);

export default function App() {
  return (
    <div className="flex h-screen flex-col overflow-hidden bg-white">
      <div className="shrink-0 bg-[#eeeeee] [font-family:'Open_Sans','Noto_Sans',sans-serif]">
        <BrowserTabs />
        <Toolbar />
        <Bookmarks />
      </div>
      <div className="flex min-h-0 flex-1 [font-family:'Liberation_Sans',Arial,sans-serif]">
        <div className="flex min-w-0 flex-1 overflow-hidden">
          <div className="w-full max-w-[820px]">
            <SiteHeader />
            <main className="pr-[35px] pl-[35px]">
              <IpInfo />
              <Tests />
              <Providers />
            </main>
          </div>
          <aside className="w-full max-w-[180px] border-l-2 border-[#e6e6e6] bg-[#f2f1ef]"></aside>
        </div>
        <Scrollbar />
      </div>
    </div>
  );
}
